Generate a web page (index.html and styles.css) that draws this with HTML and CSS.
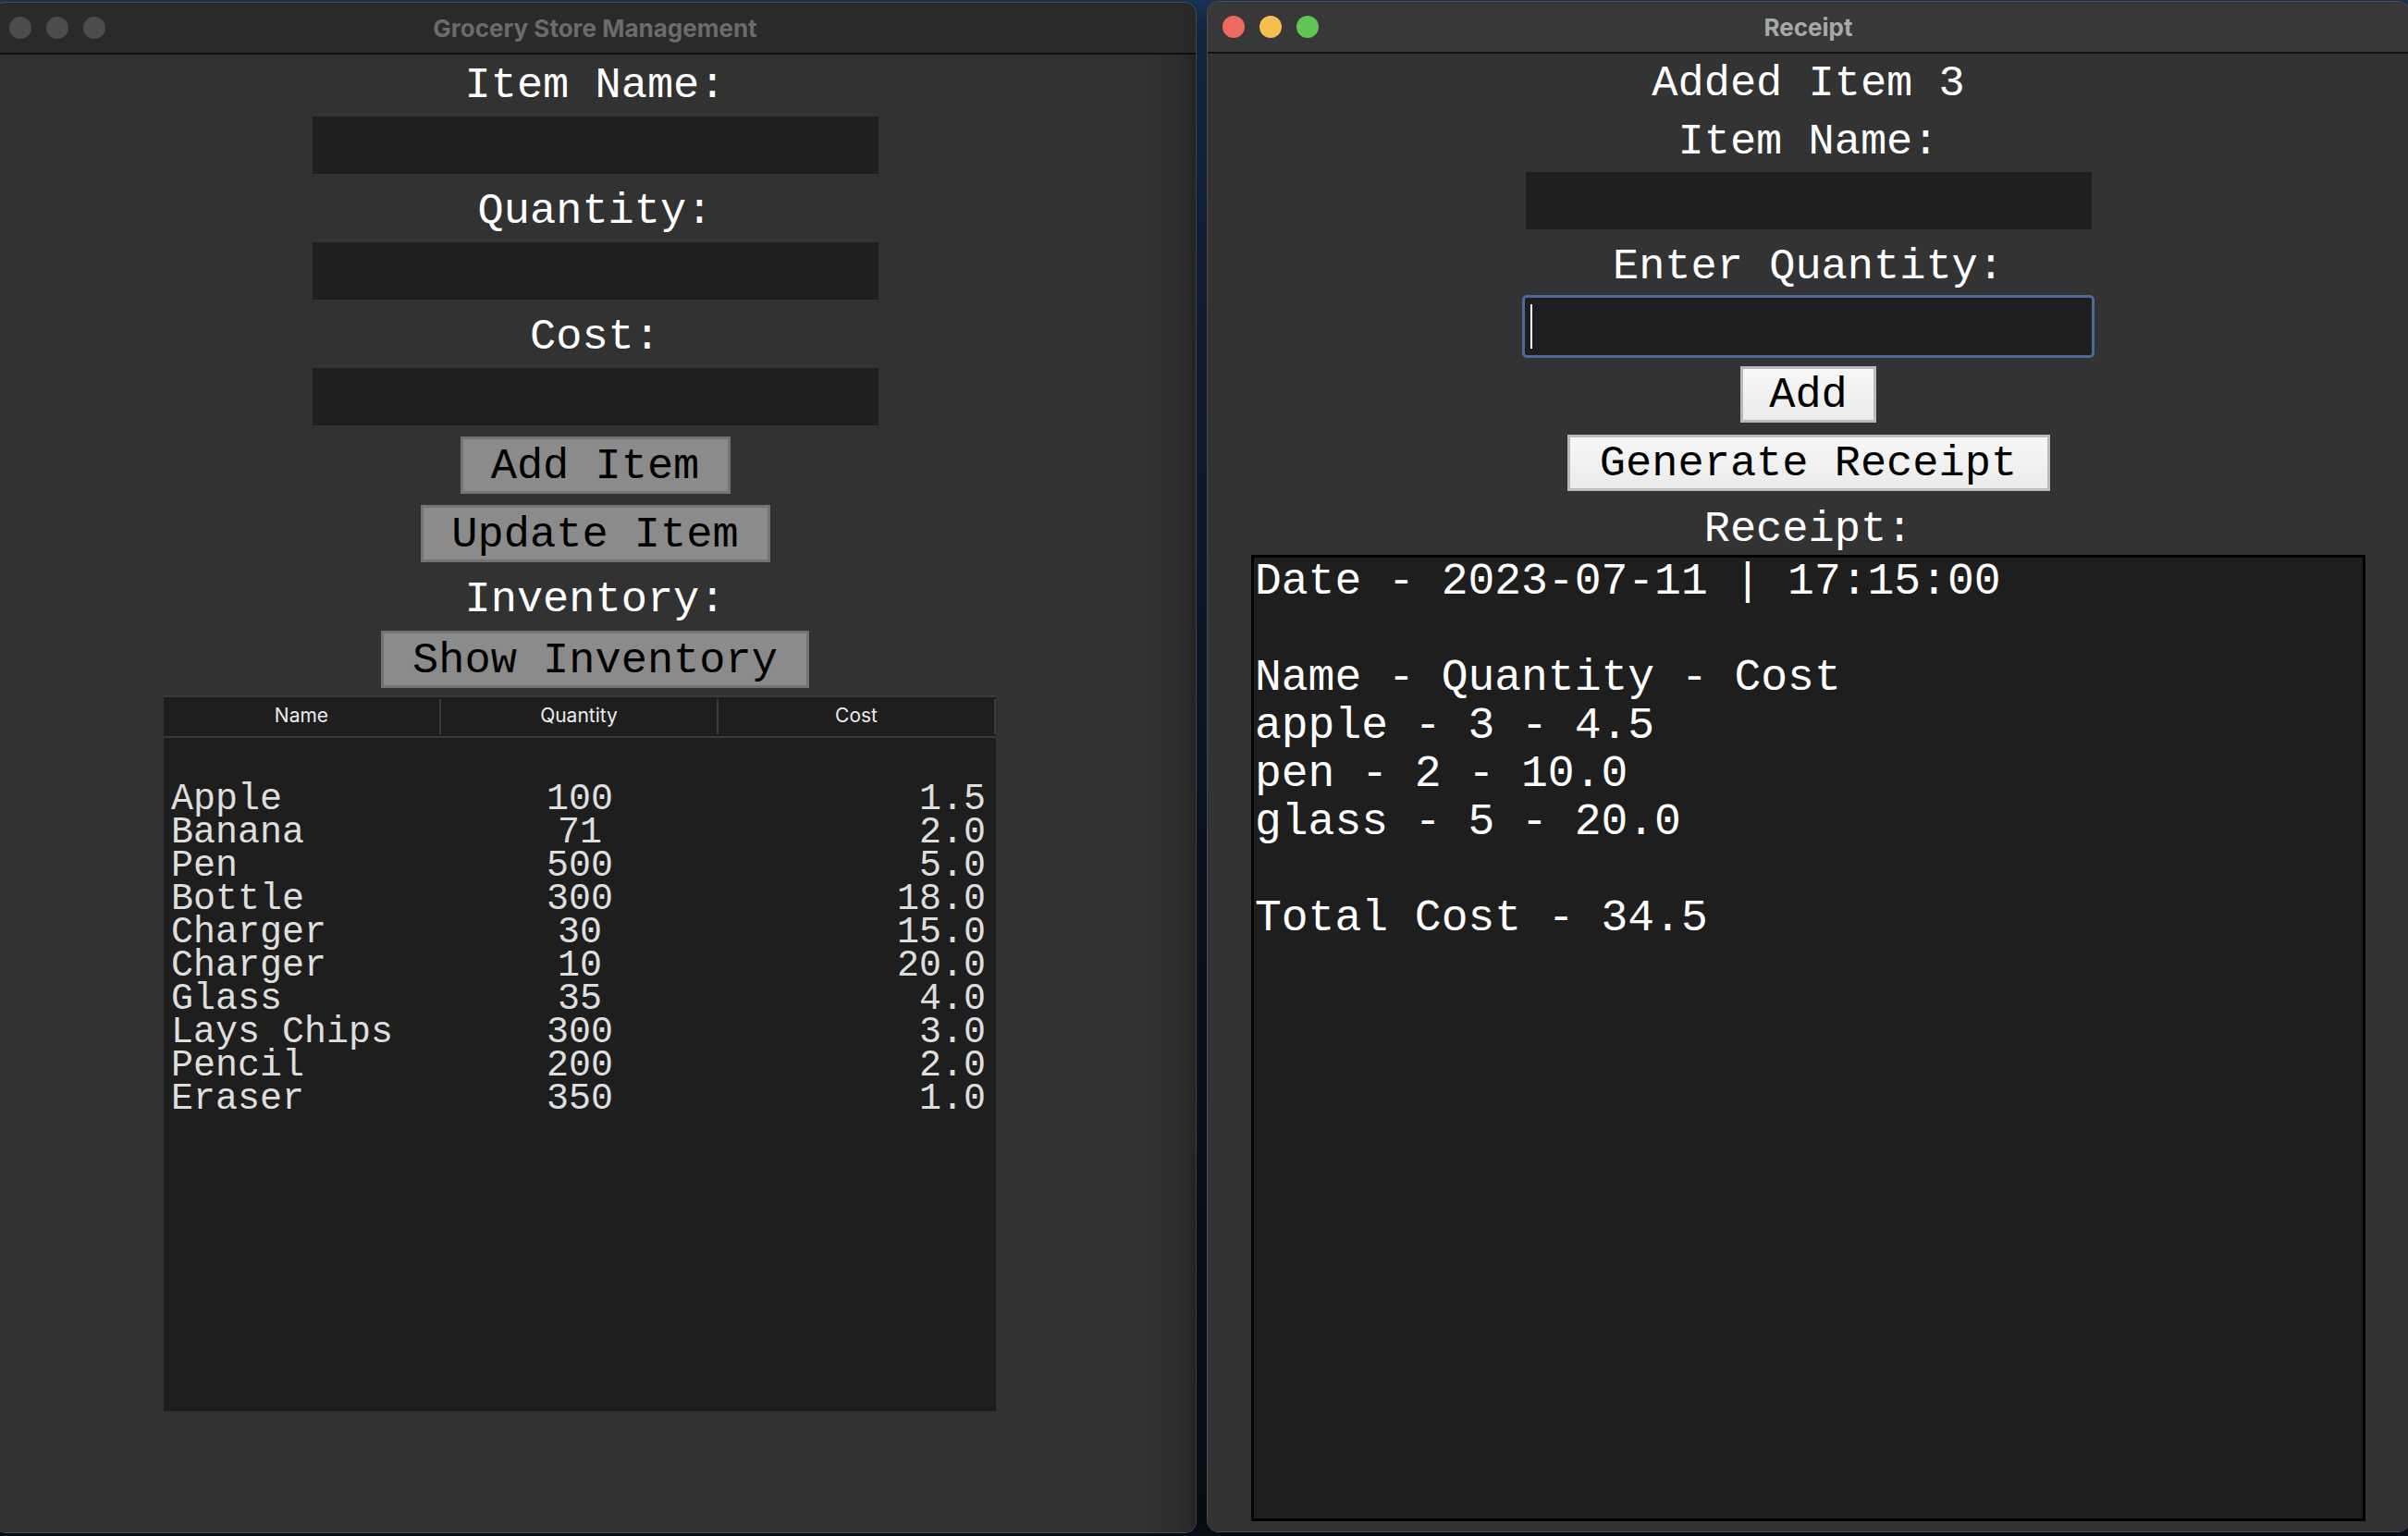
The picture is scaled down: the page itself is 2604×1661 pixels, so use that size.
FILE: index.html
```html
<!DOCTYPE html>
<html lang="en">
<head>
<meta charset="utf-8">
<title>Grocery Store Management</title>
<link rel="stylesheet" href="styles.css">
</head>
<body>
<div class="desktop">
  <section class="window window-left">
    <header class="titlebar titlebar-inactive">
      <div class="lights">
        <span class="light light-off"></span>
        <span class="light light-off"></span>
        <span class="light light-off"></span>
      </div>
      <div class="title">Grocery Store Management</div>
      <div class="spacer"></div>
    </header>
    <div class="content content-left">
      <div class="label label-first-left">Item Name:</div>
      <div class="field"></div>
      <div class="label">Quantity:</div>
      <div class="field"></div>
      <div class="label">Cost:</div>
      <div class="field"></div>
      <button class="btn btn-grey btn-additem">Add Item</button>
      <button class="btn btn-grey btn-update">Update Item</button>
      <div class="label">Inventory:</div>
      <button class="btn btn-grey btn-show">Show Inventory</button>
      <div class="tree">
        <div class="tree-head">
          <div class="th">Name</div>
          <div class="th">Quantity</div>
          <div class="th">Cost</div>
        </div>
        <div class="tree-body">
          <div class="tr"><span class="td-name">Apple</span><span class="td-qty">100</span><span class="td-cost">1.5</span></div>
          <div class="tr"><span class="td-name">Banana</span><span class="td-qty">71</span><span class="td-cost">2.0</span></div>
          <div class="tr"><span class="td-name">Pen</span><span class="td-qty">500</span><span class="td-cost">5.0</span></div>
          <div class="tr"><span class="td-name">Bottle</span><span class="td-qty">300</span><span class="td-cost">18.0</span></div>
          <div class="tr"><span class="td-name">Charger</span><span class="td-qty">30</span><span class="td-cost">15.0</span></div>
          <div class="tr"><span class="td-name">Charger</span><span class="td-qty">10</span><span class="td-cost">20.0</span></div>
          <div class="tr"><span class="td-name">Glass</span><span class="td-qty">35</span><span class="td-cost">4.0</span></div>
          <div class="tr"><span class="td-name">Lays Chips</span><span class="td-qty">300</span><span class="td-cost">3.0</span></div>
          <div class="tr"><span class="td-name">Pencil</span><span class="td-qty">200</span><span class="td-cost">2.0</span></div>
          <div class="tr"><span class="td-name">Eraser</span><span class="td-qty">350</span><span class="td-cost">1.0</span></div>
        </div>
      </div>
    </div>
  </section>

  <section class="window window-right">
    <header class="titlebar titlebar-active">
      <div class="lights">
        <span class="light light-red"></span>
        <span class="light light-yellow"></span>
        <span class="light light-green"></span>
      </div>
      <div class="title">Receipt</div>
      <div class="spacer"></div>
    </header>
    <div class="content content-right">
      <div class="label label-first-right">Added Item 3</div>
      <div class="label label-item">Item Name:</div>
      <div class="field field-right"></div>
      <div class="label">Enter Quantity:</div>
      <div class="field-focus"><span class="caret"></span></div>
      <button class="btn btn-light btn-add">Add</button>
      <button class="btn btn-light btn-gen">Generate Receipt</button>
      <div class="label label-receipt">Receipt:</div>
      <div class="receipt">Date - 2023-07-11 | 17:15:00

Name - Quantity - Cost
apple - 3 - 4.5
pen - 2 - 10.0
glass - 5 - 20.0

Total Cost - 34.5</div>
    </div>
  </section>
</div>
</body>
</html>
```

FILE: styles.css
```css
* {
  box-sizing: border-box;
}

html,
body {
  margin: 0;
  padding: 0;
}

body {
  width: 2604px;
  height: 1661px;
  overflow: hidden;
  background: linear-gradient(180deg, #1d355a 0%, #142640 25%, #0d1828 60%, #09111d 100%);
  font-family: "Liberation Mono", "DejaVu Sans Mono", monospace;
}

.desktop {
  display: flex;
  align-items: flex-start;
  gap: 13px;
  margin-left: -6px;
  height: 100%;
}

.window {
  flex: none;
  width: 1299px;
  height: 1654px;
  border-radius: 12px;
  overflow: hidden;
  display: flex;
  flex-direction: column;
  box-shadow: 0 0 0 1px #4c4c4c, 0 8px 24px rgba(0, 0, 0, 0.5);
}

.window-left {
  margin-top: 3px;
}

.window-right {
  margin-top: 2px;
}

/* Title bars */
.titlebar {
  flex: none;
  height: 56px;
  display: grid;
  grid-template-columns: 1fr auto 1fr;
  align-items: center;
  border-bottom: 2px solid #111111;
  font-family: Inter, "Liberation Sans", sans-serif;
  font-weight: 700;
  font-size: 26px;
}

.titlebar-inactive {
  background: #2a2a2a;
  color: #6b6b6b;
}

.titlebar-active {
  background: #383838;
  color: #a8a8a8;
}

.lights {
  display: flex;
  gap: 16px;
  padding-left: 16px;
}

.light {
  width: 24px;
  height: 24px;
  border-radius: 50%;
}

.light-off {
  background: #4c4c4c;
}

.light-red {
  background: #ed6a5e;
}

.light-yellow {
  background: #f4bf4f;
}

.light-green {
  background: #61c554;
}

/* Content */
.content {
  flex: 1;
  display: flex;
  flex-direction: column;
  align-items: center;
}

.content-left {
  background: linear-gradient(90deg, #323232 0%, #323232 95%, #2c2c2c 99%, #262626 100%);
}

.content-right {
  background: #333333;
}

.label {
  height: 52px;
  line-height: 52px;
  padding-top: 3px;
  margin-top: 12px;
  font-size: 47px;
  color: #ffffff;
  white-space: pre;
}

.label-first-left {
  margin-top: 5px;
}

.label-first-right {
  margin-top: 4px;
}

.label-item {
  margin-top: 11px;
}

.label-receipt {
  margin-top: 13px;
}

.field {
  width: 612px;
  height: 62px;
  margin-top: 10px;
  background: #1f1f1f;
}

.field-right {
  margin-top: 9px;
}

.field-focus {
  width: 619px;
  height: 68px;
  margin-top: 7px;
  border: 3px solid #4b6a9b;
  border-radius: 5px;
  background: #1e1e1e;
  display: flex;
  align-items: center;
  padding-left: 6px;
}

.caret {
  width: 2px;
  height: 48px;
  background: #ffffff;
}

/* Buttons */
.btn {
  flex: none;
  height: 62px;
  margin-top: 12px;
  padding: 3px 0 0;
  border-width: 3px;
  border-style: solid;
  font-family: "Liberation Mono", "DejaVu Sans Mono", monospace;
  font-size: 47px;
  line-height: 53px;
  color: #000000;
  text-align: center;
  white-space: pre;
}

.btn-grey {
  background: #8b8b8b;
  border-color: #737373;
}

.btn-light {
  height: 61px;
  line-height: 52px;
  background: linear-gradient(180deg, #f7f7f7 0%, #ebebeb 100%);
  border-color: #bababa;
}

.btn-additem {
  width: 292px;
}

.btn-update {
  width: 378px;
}

.btn-show {
  width: 463px;
  margin-top: 10px;
}

.btn-add {
  width: 147px;
  margin-top: 9px;
}

.btn-gen {
  width: 522px;
  margin-top: 13px;
}

/* Inventory tree */
.tree {
  align-self: flex-start;
  margin-left: 183px;
  margin-top: 8px;
  width: 900px;
  height: 774px;
  background: #1e1e1e;
}

.tree-head {
  display: grid;
  grid-template-columns: 300px 300px 300px;
  height: 46px;
  border-top: 2px solid #3a3a3a;
  border-bottom: 2px solid #3a3a3a;
}

.th {
  height: 38px;
  margin: 2px 0;
  border-right: 2px solid #3a3a3a;
  text-align: center;
  line-height: 36px;
  font-family: Inter, "Liberation Sans", sans-serif;
  font-size: 21px;
  color: #ececec;
}

.tree-body {
  padding-top: 49px;
}

.tr {
  display: grid;
  grid-template-columns: 300px 300px 300px;
  height: 36px;
  line-height: 36px;
  font-size: 40px;
  color: #dedede;
  white-space: pre;
}

.td-name {
  padding-left: 8px;
}

.td-qty {
  text-align: center;
}

.td-cost {
  text-align: right;
  padding-right: 11px;
}

/* Receipt text box */
.receipt {
  width: 1205px;
  height: 1045px;
  margin-top: 4px;
  border: 3px solid #000000;
  background: #1e1e1e;
  color: #ffffff;
  font-size: 48px;
  line-height: 52px;
  white-space: pre;
  padding-left: 1px;
}
```
